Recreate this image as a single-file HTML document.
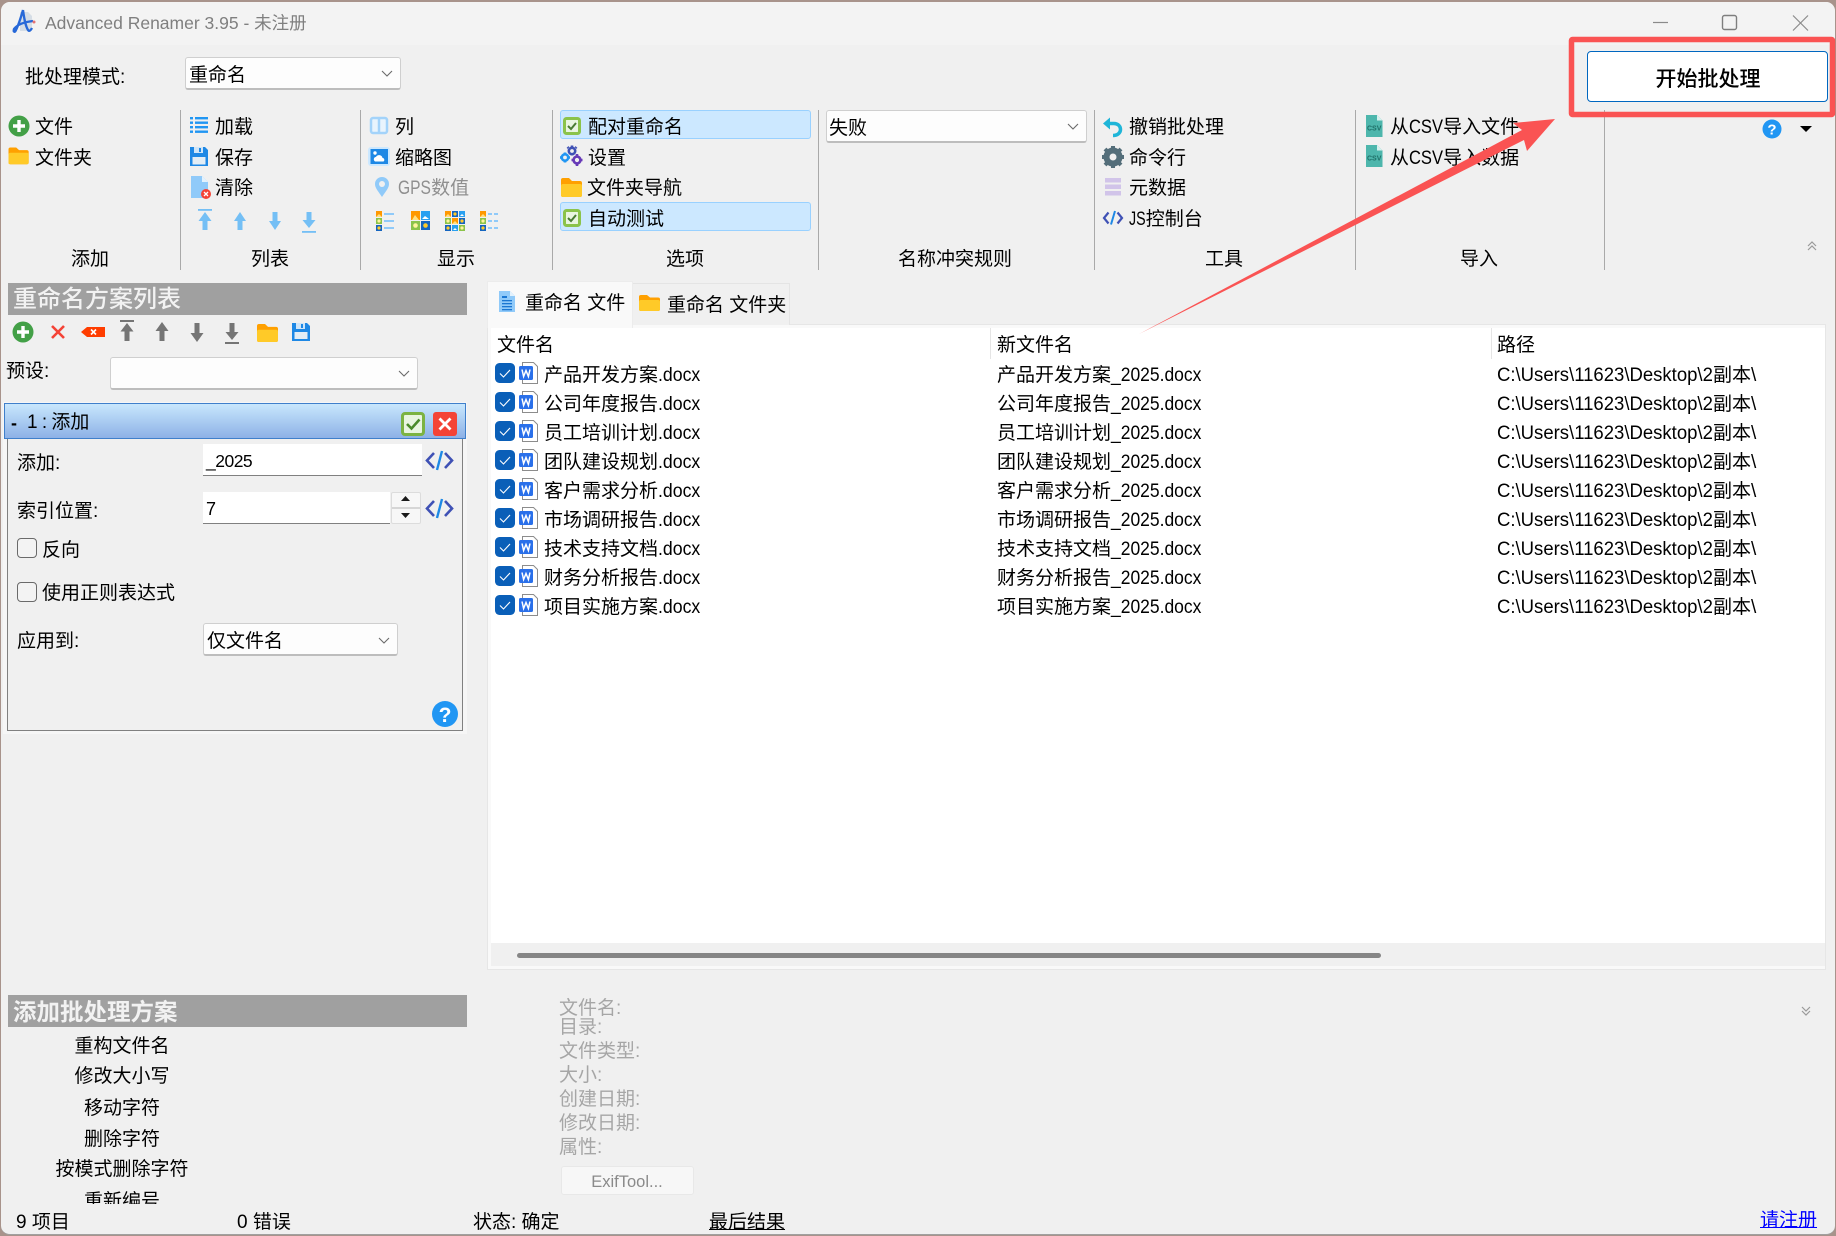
<!DOCTYPE html>
<html lang="zh"><head><meta charset="utf-8"><title>Advanced Renamer</title>
<style>
html,body{margin:0;padding:0;width:1836px;height:1236px;overflow:hidden;background:#a8938b}
*{box-sizing:border-box}
#win{position:absolute;left:1px;top:2px;width:1834px;height:1233px;background:#f0f0f0;border-radius:9px 9px 9px 9px;overflow:hidden;border-bottom:1px solid #a0a0a0}
#root{position:absolute;left:0;top:0;width:1836px;height:1236px;font-family:"Liberation Sans","Noto Sans CJK SC",sans-serif;font-size:19px;color:#000}
.b{position:absolute}
.t{position:absolute;white-space:nowrap;line-height:26px;height:26px;margin-top:-11.5px}
.c{transform:translateX(-50%)}
.g{color:#a6a6a6}
.s{display:inline-block;transform-origin:0 50%}
.d{transform:scaleX(.93);margin-right:-3px}
.n{transform:scaleX(.92);margin-right:-8px}
.p{transform:scaleX(.975);margin-right:-5.5px}
.l{transform:scaleX(.87);margin-right:-5px}
.combo{position:absolute;background:#fdfdfd;border:1px solid #cfcfcf;border-bottom:2px solid #bdbdbd;border-radius:3px}
.v{position:absolute;width:1px;top:110px;height:160px;background:#a9a9a9}
.hl{position:absolute;background:#cce8ff;border:1px solid #99d1ff;border-radius:3px;left:560px;width:251px}
.hd{position:absolute;background:#a0a0a0;left:8px;width:459px;height:32px}
.hdt{color:#f2f2f2;font-size:24px;font-weight:500;line-height:34px;position:absolute;left:13px;white-space:nowrap}
svg{position:absolute;left:0;top:0}
</style></head><body>
<div id="win"></div>
<div id="root">
<div class="b" style="left:1px;top:2px;width:1834px;height:43px;background:#f3f3f3;border-radius:9px 9px 0 0"></div>
<div class="t" style="left:45px;top:21px;font-size:17.5px;color:#7f7f7f">Advanced Renamer 3.95 - 未注册</div>

<div class="t" style="left:25px;top:76px">批处理模式:</div>
<div class="combo" style="left:185px;top:57px;width:216px;height:33px"></div>
<div class="t" style="left:189px;top:74px">重命名</div>

<div class="v" style="left:180px"></div><div class="v" style="left:360px"></div><div class="v" style="left:552px"></div>
<div class="v" style="left:818px"></div><div class="v" style="left:1094px"></div><div class="v" style="left:1355px"></div><div class="v" style="left:1604px"></div>

<div class="hl" style="top:110px;height:29px"></div>
<div class="hl" style="top:202px;height:29px"></div>
<div class="combo" style="left:826px;top:110px;width:261px;height:33px"></div>
<div class="b" style="left:368px;top:147px;width:22px;height:19px;background:#cce8ff;border-radius:3px"></div>

<div class="t" style="left:35px;top:126px">文件</div>
<div class="t" style="left:35px;top:157px">文件夹</div>
<div class="t" style="left:215px;top:126px">加载</div>
<div class="t" style="left:215px;top:157px">保存</div>
<div class="t" style="left:215px;top:187px">清除</div>
<div class="t" style="left:395px;top:126px">列</div>
<div class="t" style="left:395px;top:157px">缩略图</div>
<div class="t" style="left:398px;top:187px;color:#8f8f8f"><span class="s" style="transform:scaleX(.82);margin-right:-7px">GPS</span>数值</div>
<div class="t" style="left:588px;top:126px">配对重命名</div>
<div class="t" style="left:588px;top:157px">设置</div>
<div class="t" style="left:587px;top:187px">文件夹导航</div>
<div class="t" style="left:588px;top:218px">自动测试</div>
<div class="t" style="left:829px;top:127px">失败</div>
<div class="t" style="left:1129px;top:126px">撤销批处理</div>
<div class="t" style="left:1129px;top:157px">命令行</div>
<div class="t" style="left:1129px;top:187px">元数据</div>
<div class="t" style="left:1129px;top:218px"><span class="s" style="transform:scaleX(.75);margin-right:-5.5px">JS</span>控制台</div>
<div class="t" style="left:1390px;top:126px">从<span class="s l">CSV</span>导入文件</div>
<div class="t" style="left:1390px;top:157px">从<span class="s l">CSV</span>导入数据</div>

<div class="t c" style="left:90px;top:258px">添加</div>
<div class="t c" style="left:270px;top:258px">列表</div>
<div class="t c" style="left:456px;top:258px">显示</div>
<div class="t c" style="left:685px;top:258px">选项</div>
<div class="t c" style="left:955px;top:258px">名称冲突规则</div>
<div class="t c" style="left:1224px;top:258px">工具</div>
<div class="t c" style="left:1479px;top:258px">导入</div>

<!-- left panel -->
<div class="hd" style="top:283px"><div class="hdt" style="left:5px">重命名方案列表</div></div>
<div class="t" style="left:6px;top:370px">预设:</div>
<div class="combo" style="left:110px;top:357px;width:308px;height:33px"></div>
<div class="b" style="left:3px;top:402px;width:464px;height:332px;background:#f6f6f6"></div>
<div class="b" style="left:7px;top:439px;width:456px;height:292px;background:#f0f0f0;border:1px solid #808080;border-top:0"></div>
<div class="b" style="left:4px;top:403px;width:462px;height:36px;background:linear-gradient(#c8e7fd,#8db1e6);border:1px solid #3f7fcb"></div>
<div class="t" style="left:11px;top:421px;font-size:18px;font-weight:700">-</div>
<div class="t" style="left:27px;top:421px;word-spacing:-1px">1 : 添加</div>
<div class="t" style="left:17px;top:462px">添加:</div>
<div class="b" style="left:203px;top:444px;width:219px;height:32px;background:#fff;border-bottom:1px solid #808080"></div>
<div class="t" style="left:206px;top:459px;font-size:17.5px;letter-spacing:-.5px">_2025</div>
<div class="t" style="left:17px;top:510px">索引位置:</div>
<div class="b" style="left:203px;top:492px;width:187px;height:32px;background:#fff;border-bottom:1px solid #808080"></div>
<div class="t" style="left:206px;top:507px;font-size:18px">7</div>
<div class="b" style="left:391px;top:492px;width:30px;height:32px;background:#f7f7f7;border:1px solid #dcdcdc;border-radius:2px"></div>
<div class="b" style="left:392px;top:507px;width:28px;height:2px;background:#d6d6d6"></div>
<div class="b" style="left:17px;top:538px;width:20px;height:20px;background:#f3f3f3;border:1px solid #6a6a6a;border-radius:4px"></div>
<div class="t" style="left:42px;top:549px">反向</div>
<div class="b" style="left:17px;top:582px;width:20px;height:20px;background:#f3f3f3;border:1px solid #6a6a6a;border-radius:4px"></div>
<div class="t" style="left:42px;top:592px">使用正则表达式</div>
<div class="t" style="left:17px;top:640px">应用到:</div>
<div class="combo" style="left:203px;top:623px;width:195px;height:33px"></div>
<div class="t" style="left:207px;top:640px">仅文件名</div>

<!-- tabs -->
<div class="b" style="left:487px;top:324px;width:1339px;height:646px;background:#f9f9f9;border:1px solid #e6e6e6"></div>
<div class="b" style="left:632px;top:283px;width:158px;height:42px;background:#f0f0f0;border:1px solid #e4e4e4;border-bottom:0"></div>
<div class="b" style="left:487px;top:281px;width:146px;height:47px;background:#f9f9f9;border:1px solid #ececec;border-bottom:0"></div>
<div class="t" style="left:525px;top:302px">重命名 文件</div>
<div class="t" style="left:667px;top:304px">重命名 文件夹</div>
<div class="b" style="left:491px;top:328px;width:1334px;height:615px;background:#fff"></div>
<div class="b" style="left:491px;top:943px;width:1334px;height:23px;background:#f0f0f0"></div>
<div class="b" style="left:517px;top:953px;width:864px;height:5px;background:#868686;border-radius:3px"></div>
<div class="b" style="left:990px;top:328px;width:1px;height:31px;background:#e5e5e5"></div>
<div class="b" style="left:1491px;top:328px;width:1px;height:31px;background:#e5e5e5"></div>
<div class="t" style="left:497px;top:344px">文件名</div>
<div class="t" style="left:997px;top:344px">新文件名</div>
<div class="t" style="left:1497px;top:344px">路径</div>

<div class="b" style="left:0;top:-1px;width:0;height:0">
<div class="t" style="left:544px;top:375px">产品开发方案<span class="s d">.docx</span></div><div class="t" style="left:997px;top:375px">产品开发方案<span class="s n">_2025.docx</span></div><div class="t" style="left:1497px;top:375px"><span class="s p">C:\Users\11623\Desktop\2</span>副本\</div>
<div class="t" style="left:544px;top:404px">公司年度报告<span class="s d">.docx</span></div><div class="t" style="left:997px;top:404px">公司年度报告<span class="s n">_2025.docx</span></div><div class="t" style="left:1497px;top:404px"><span class="s p">C:\Users\11623\Desktop\2</span>副本\</div>
<div class="t" style="left:544px;top:433px">员工培训计划<span class="s d">.docx</span></div><div class="t" style="left:997px;top:433px">员工培训计划<span class="s n">_2025.docx</span></div><div class="t" style="left:1497px;top:433px"><span class="s p">C:\Users\11623\Desktop\2</span>副本\</div>
<div class="t" style="left:544px;top:462px">团队建设规划<span class="s d">.docx</span></div><div class="t" style="left:997px;top:462px">团队建设规划<span class="s n">_2025.docx</span></div><div class="t" style="left:1497px;top:462px"><span class="s p">C:\Users\11623\Desktop\2</span>副本\</div>
<div class="t" style="left:544px;top:491px">客户需求分析<span class="s d">.docx</span></div><div class="t" style="left:997px;top:491px">客户需求分析<span class="s n">_2025.docx</span></div><div class="t" style="left:1497px;top:491px"><span class="s p">C:\Users\11623\Desktop\2</span>副本\</div>
<div class="t" style="left:544px;top:520px">市场调研报告<span class="s d">.docx</span></div><div class="t" style="left:997px;top:520px">市场调研报告<span class="s n">_2025.docx</span></div><div class="t" style="left:1497px;top:520px"><span class="s p">C:\Users\11623\Desktop\2</span>副本\</div>
<div class="t" style="left:544px;top:549px">技术支持文档<span class="s d">.docx</span></div><div class="t" style="left:997px;top:549px">技术支持文档<span class="s n">_2025.docx</span></div><div class="t" style="left:1497px;top:549px"><span class="s p">C:\Users\11623\Desktop\2</span>副本\</div>
<div class="t" style="left:544px;top:578px">财务分析报告<span class="s d">.docx</span></div><div class="t" style="left:997px;top:578px">财务分析报告<span class="s n">_2025.docx</span></div><div class="t" style="left:1497px;top:578px"><span class="s p">C:\Users\11623\Desktop\2</span>副本\</div>
<div class="t" style="left:544px;top:607px">项目实施方案<span class="s d">.docx</span></div><div class="t" style="left:997px;top:607px">项目实施方案<span class="s n">_2025.docx</span></div><div class="t" style="left:1497px;top:607px"><span class="s p">C:\Users\11623\Desktop\2</span>副本\</div>
</div>

<!-- lower -->
<div class="hd" style="top:995px"><div class="hdt" style="left:5px;font-weight:700;font-size:23.5px">添加批处理方案</div></div>
<div class="b" style="left:8px;top:1030px;width:459px;height:174px;overflow:hidden">
<div class="t c" style="left:114px;top:15px">重构文件名</div>
<div class="t c" style="left:114px;top:45px">修改大小写</div>
<div class="t c" style="left:114px;top:77px">移动字符</div>
<div class="t c" style="left:114px;top:108px">删除字符</div>
<div class="t c" style="left:114px;top:138px">按模式删除字符</div>
<div class="t c" style="left:114px;top:170px">重新编号</div>
</div>
<div class="t g" style="left:559px;top:1007px">文件名:</div>
<div class="t g" style="left:559px;top:1026px">目录:</div>
<div class="t g" style="left:559px;top:1050px">文件类型:</div>
<div class="t g" style="left:559px;top:1074px">大小:</div>
<div class="t g" style="left:559px;top:1098px">创建日期:</div>
<div class="t g" style="left:559px;top:1122px">修改日期:</div>
<div class="t g" style="left:559px;top:1146px">属性:</div>
<div class="b" style="left:561px;top:1166px;width:133px;height:29px;background:#f7f7f7;border:1px solid #e8e8e8;border-radius:3px"></div>
<div class="t c" style="left:627px;top:1180px;color:#8a8a8a;font-size:16.5px">ExifTool...</div>

<div class="t" style="left:16px;top:1221px">9 项目</div>
<div class="t" style="left:237px;top:1221px">0 错误</div>
<div class="t" style="left:473px;top:1221px">状态: 确定</div>
<div class="t" style="left:709px;top:1221px;text-decoration:underline">最后结果</div>
<div class="t" style="left:1760px;top:1219px;color:#0000ff;text-decoration:underline">请注册</div>

<!-- start button -->
<div class="b" style="left:1587px;top:51px;width:241px;height:51px;background:#fff;border:1px solid #0067c0;border-radius:4px"></div>
<div class="t c" style="left:1708px;top:78px;font-size:21px;font-weight:500">开始批处理</div>

<svg width="1836" height="1236" viewBox="0 0 1836 1236" fill="none">
<defs>
<symbol id="chev" overflow="visible"><path d="M0 0l5 5 5-5" stroke="#6a6a6a" stroke-width="1.1" fill="none"/></symbol>
<symbol id="cb" overflow="visible"><rect x="0" y="0" width="20" height="20" rx="4.5" fill="#0a5fb8"/><path d="M5 10.5l3.5 3.5 6.5-7" stroke="#fff" stroke-width="1.1" fill="none"/></symbol>
<symbol id="word" overflow="visible"><path d="M3.5 0.5h11l4 4v17h-15z" fill="#fff" stroke="#8c8c8c"/><rect x="0" y="4" width="14" height="14" rx="1.5" fill="#2a70ea"/><path d="M3 7.5l1.6 7 2.4-6 2.4 6 1.6-7" stroke="#fff" stroke-width="1.5" fill="none"/></symbol>
<symbol id="code" overflow="visible"><path d="M8 2L1 9.5 8 17" stroke="#3f51b5" stroke-width="2.6" fill="none"/><path d="M19 2l7 7.5-7 7.5" stroke="#3f51b5" stroke-width="2.6" fill="none"/><path d="M16 0l-5 19" stroke="#1e88e5" stroke-width="2.4"/></symbol>
<symbol id="folder" overflow="visible"><path d="M0 2a2 2 0 0 1 2-2h6l3 3h8a2 2 0 0 1 2 2v12a2 2 0 0 1-2 2H2a2 2 0 0 1-2-2z" fill="#ffa000"/><path d="M0 8a2 2 0 0 1 2-2h17a2 2 0 0 1 2 2v9a2 2 0 0 1-2 2H2a2 2 0 0 1-2-2z" fill="#ffca28"/></symbol>
<symbol id="chk" overflow="visible"><rect x="1.5" y="1.5" width="15" height="15" rx="2" fill="#e9f5e0" stroke="#8bc34a" stroke-width="3"/><path d="M5 9l3 3 5-6" stroke="#4a7c33" stroke-width="2" fill="none"/></symbol>
<symbol id="plus" overflow="visible"><circle cx="0" cy="0" r="10.5" fill="#43a047"/><path d="M-6 0h12M0-6v12" stroke="#fff" stroke-width="3.4"/></symbol>
<symbol id="sun" overflow="visible"><rect width="6" height="6" fill="#ff9800"/><path d="M0 6l3-3 3 3z" fill="#ffe082"/></symbol>
<symbol id="flw" overflow="visible"><rect width="6" height="6" fill="#8bc34a"/><circle cx="3" cy="3" r="1.6" fill="#fff59d"/></symbol>
<symbol id="nvy" overflow="visible"><rect width="6" height="6" fill="#1565c0"/><circle cx="3" cy="3" r="1.6" fill="#ffca28"/></symbol>
<symbol id="sky" overflow="visible"><rect width="6" height="6" fill="#29a0f0"/><path d="M1 5l2-2 2 2z" fill="#fff"/></symbol>
<symbol id="csv" overflow="visible"><path d="M0 0h11l5.500 5.500V22H0z" fill="#4db6ac"/><path d="M11 0v5.500h5.500z" fill="#d6f1ee"/><text x="8.200" y="15.500" text-anchor="middle" font-family="Liberation Sans" font-weight="700" font-size="7" fill="#1f6f67">CSV</text></symbol>
</defs>

<!-- logo -->
<path d="M20 12h8l4 4v15H20z" fill="#d5dde6"/>
<path d="M23 10c-2 7-4 14-7 20-1 3-3 2-2-1 3-4 10-7 19-8M23 10c1 7 2 15 5 20 1 2 3 0 4-2" stroke="#2768d8" stroke-width="2.300" fill="none"/>
<circle cx="34" cy="22" r="1.500" fill="#e57373"/>

<!-- window controls -->
<path d="M1653 22.500h15" stroke="#8a8a8a" stroke-width="1.200"/>
<rect x="1722.500" y="15.500" width="14" height="14" rx="2" stroke="#7e7e7e" stroke-width="1.400"/>
<path d="M1793 15.500l15 15M1808 15.500l-15 15" stroke="#8a8a8a" stroke-width="1.200"/>

<!-- combo chevrons -->
<use href="#chev" x="382" y="71"/><use href="#chev" x="1068" y="124"/><use href="#chev" x="399" y="371"/><use href="#chev" x="379" y="638"/>

<!-- group 1 -->
<g transform="translate(19 126)"><use href="#plus"/></g>
<g transform="translate(8.500 147.500) scale(.96 .88)"><use href="#folder"/></g>

<!-- list group -->
<g fill="#2196f3"><rect x="190" y="117" width="3" height="2.400"/><rect x="195" y="117" width="13" height="2.400"/><rect x="190" y="121.500" width="3" height="2.400"/><rect x="195" y="121.500" width="13" height="2.400"/><rect x="190" y="126" width="3" height="2.400"/><rect x="195" y="126" width="13" height="2.400"/><rect x="190" y="130.500" width="3" height="2.400"/><rect x="195" y="130.500" width="13" height="2.400"/></g>
<path d="M190 147h15l3 3v16h-18z" fill="#1e88e5"/><rect x="194" y="147" width="9" height="6" fill="#cfe5f8"/><rect x="199" y="148" width="2" height="4" fill="#1e88e5"/><rect x="192.500" y="157" width="13" height="7.500" fill="#e3edf5"/>
<path d="M191 176h11l6 6v16h-17z" fill="#90caf9"/><path d="M202 176v6h6z" fill="#e3f2fd"/>
<circle cx="206" cy="194" r="5" fill="#f44336"/><path d="M204 192l4 4M208 192l-4 4" stroke="#fff" stroke-width="1.300"/>
<g fill="#74bff5">
<rect x="198" y="209" width="14" height="1.800"/>
<path d="M205 212l-6.500 9h4v9h5v-9h4z"/>
<path d="M240 212l-6 9h3.500v9h5v-9h3.500z"/>
<path d="M275 230l-6-9h3.500v-9h5v9h3.500z"/>
<path d="M309 228l-6.500-8h4v-8h5v8h4z"/>
<rect x="302" y="231" width="14" height="1.800"/>
</g>

<!-- display group -->
<rect x="371" y="118" width="16" height="15" rx="2" stroke="#a3d3fa" stroke-width="2.500" fill="#e9f4fd"/><path d="M379 118v15" stroke="#a3d3fa" stroke-width="2.500"/>
<rect x="370.500" y="149" width="17.500" height="15" fill="#1e88e5"/><circle cx="375" cy="153" r="1.700" fill="#fff"/><path d="M375 161.500a2.500 2.500 0 0 1 1-4.600 3.500 3.500 0 0 1 6.500 1 2 2 0 0 1 1 3.600z" fill="#fff"/>
<path d="M382 197c-4-6-7-9-7-13a7 7 0 0 1 14 0c0 4-3 7-7 13z" fill="#90caf9"/><circle cx="382" cy="184" r="3" fill="#f0f0f0"/>
<use href="#sun" x="376" y="211"/><use href="#flw" x="376" y="218"/><use href="#nvy" x="376" y="225"/>
<g stroke="#90caf9" stroke-width="2"><path d="M384 214h10M384 221h10M384 228h10"/></g>
<g transform="translate(411 211)"><rect width="9" height="9" fill="#ff9800"/><path d="M1 9l3-5 4 5z" fill="#ffe082"/><rect x="10" width="9" height="9" fill="#29a0f0"/><path d="M11 8l3-3 4 3z" fill="#fff"/><rect y="10" width="9" height="9" fill="#8bc34a"/><circle cx="4.500" cy="14.500" r="2.300" fill="#fff59d"/><rect x="10" y="10" width="9" height="9" fill="#1565c0"/><circle cx="14.500" cy="14.500" r="2.300" fill="#ffca28"/></g>
<use href="#sun" x="445" y="211"/><use href="#nvy" x="452" y="211"/><use href="#sky" x="459" y="211"/>
<use href="#flw" x="445" y="218"/><use href="#sun" x="452" y="218"/><use href="#nvy" x="459" y="218"/>
<use href="#nvy" x="445" y="225"/><use href="#sky" x="452" y="225"/><use href="#flw" x="459" y="225"/>
<use href="#sun" x="480" y="211"/><use href="#flw" x="480" y="218"/><use href="#nvy" x="480" y="225"/>
<g stroke="#90caf9" stroke-width="2"><path d="M488 214h4M494 214h4M488 221h4M494 221h4M488 228h4M494 228h4"/></g>

<!-- options -->
<use href="#chk" x="563" y="117"/><use href="#chk" x="563" y="209"/>
<g fill="none" stroke-width="2.600"><circle cx="572" cy="151" r="3.200" stroke="#3f51b5"/><path d="M572 147v-1.500M572 155.500v-1M568.500 148l-1-1M575.500 148l1-1" stroke="#3f51b5"/><circle cx="565" cy="157.500" r="3.200" stroke="#2196f3"/><path d="M565 153.500v-1M565 162.500v-1M561 157.500h-1M569 157.500h1" stroke="#2196f3"/><circle cx="577" cy="160" r="3.400" stroke="#673ab7"/><path d="M577 155.500v-1.500M577 166v-1.500M572.500 160h-1M582.500 160h-1" stroke="#673ab7"/></g>
<use href="#folder" x="561" y="178"/>

<!-- tools -->
<path d="M1108 123.500h6c4 0 6.500 2.700 6.500 6s-3 6-7.500 6" stroke="#1fb5d8" stroke-width="3.500" fill="none"/><path d="M1103 123.500l7-6v12z" fill="#1fb5d8"/>
<circle cx="1113" cy="157" r="6.500" stroke="#546e7a" stroke-width="6"/>
<g stroke="#546e7a" stroke-width="4"><path d="M1113 146v4M1113 164v4M1102 157h4M1120 157h4M1105 149l3 3M1118 162l3 3M1121 149l-3 3M1108 162l-3 3"/></g>
<g fill="#d1c4e9"><rect x="1105" y="178" width="16" height="4.500"/><rect x="1105" y="184.500" width="16" height="4.500"/><rect x="1105" y="191" width="16" height="4.500"/></g>
<path d="M1108.500 212.500l-4.500 5.500 4.500 5.500" stroke="#3f51b5" stroke-width="2.200"/><path d="M1117.500 212.500l4.500 5.500-4.500 5.500" stroke="#3f51b5" stroke-width="2.200"/><path d="M1115 211l-4 13.500" stroke="#1e88e5" stroke-width="2"/>

<!-- csv -->
<use href="#csv" x="1366" y="115"/><use href="#csv" x="1366" y="145"/>

<!-- help + triangle + chevrons -->
<circle cx="1772" cy="129" r="9.500" fill="#2196f3"/><text x="1772" y="134.500" text-anchor="middle" font-family="Liberation Sans" font-weight="700" font-size="15" fill="#fff">?</text>
<path d="M1800 126h12l-6 6z" fill="#000"/>
<path d="M1808 246l4-4 4 4M1808 250l4-4 4 4" stroke="#999" stroke-width="1.200"/>
<path d="M1802 1007l4 4 4-4M1802 1011l4 4 4-4" stroke="#999" stroke-width="1.200"/>

<!-- preset toolbar -->
<g transform="translate(23 332)"><use href="#plus"/></g>
<path d="M52 326l12 12M64 326l-12 12" stroke="#f44336" stroke-width="2.600"/>
<path d="M81 332l6-5h18v10H87z" fill="#ff3d00"/><path d="M91 329.500l5 5M96 329.500l-5 5" stroke="#fff" stroke-width="1.600"/>
<g fill="#757575"><rect x="120" y="320" width="14" height="2"/><path d="M127 323l-6.500 8.500h4v9.500h5v-9.500h4z"/><path d="M162 322l-6.500 9h4v10h5v-10h4z"/><path d="M197 342l-6.500-9h4v-10h5v10h4z"/><path d="M232 340l-6.500-8h4v-9h5v9h4z"/><rect x="225" y="342" width="14" height="2"/></g>
<g transform="translate(257 324) scale(1 .95)"><use href="#folder"/></g>
<path d="M292 323h15l3 3v15h-18z" fill="#1e88e5"/><rect x="296" y="323" width="9" height="6" fill="#cfe5f8"/><rect x="301" y="324" width="2" height="4" fill="#1e88e5"/><rect x="294.500" y="332" width="13" height="7" fill="#e3edf5"/>

<!-- rule header -->
<rect x="402.500" y="413.500" width="21" height="21" rx="2.500" fill="#e9f5e0" stroke="#7cb342" stroke-width="3"/><path d="M407 424l4.500 4.500 8-9" stroke="#4a8a2a" stroke-width="2.600" fill="none"/>
<rect x="433" y="412" width="24" height="24" rx="3" fill="#f44336"/><path d="M439.500 418.500l11 11M450.500 418.500l-11 11" stroke="#fff" stroke-width="2.800"/>
<use href="#code" x="426" y="451"/><use href="#code" x="426" y="499"/>
<path d="M405.500 496l4.500 5h-9zM405.500 518l4.500-5h-9z" fill="#1a1a1a"/>
<circle cx="445" cy="714" r="13" fill="#2196f3"/><text x="445" y="722" text-anchor="middle" font-family="Liberation Sans" font-weight="700" font-size="21" fill="#fff">?</text>

<!-- tab icons -->
<path d="M499 291h11l5 5v16h-16z" fill="#90caf9"/><path d="M510 291v5h5z" fill="#e3f2fd"/><g fill="#1976d2"><rect x="502" y="296" width="5" height="2"/><rect x="502" y="300" width="10" height="1.300"/><rect x="502" y="303" width="10" height="1.300"/><rect x="502" y="306" width="10" height="1.300"/><rect x="502" y="309" width="10" height="1.300"/></g>
<g transform="translate(639 295) scale(1 .84)"><use href="#folder"/></g>

<!-- row icons -->
<use href="#cb" x="495" y="363"/><use href="#word" x="519" y="362"/>
<use href="#cb" x="495" y="392"/><use href="#word" x="519" y="391"/>
<use href="#cb" x="495" y="421"/><use href="#word" x="519" y="420"/>
<use href="#cb" x="495" y="450"/><use href="#word" x="519" y="449"/>
<use href="#cb" x="495" y="479"/><use href="#word" x="519" y="478"/>
<use href="#cb" x="495" y="508"/><use href="#word" x="519" y="507"/>
<use href="#cb" x="495" y="537"/><use href="#word" x="519" y="536"/>
<use href="#cb" x="495" y="566"/><use href="#word" x="519" y="565"/>
<use href="#cb" x="495" y="595"/><use href="#word" x="519" y="594"/>

<!-- annotation -->
<rect x="1571.500" y="39.500" width="261" height="75" rx="1" stroke="#fa5353" stroke-width="5.500"/>
<path d="M1139 334L1522 130 1513 123 1555 119 1527 151 1524 140Z" fill="#fa5353"/>
</svg>
</div>
</body></html>
